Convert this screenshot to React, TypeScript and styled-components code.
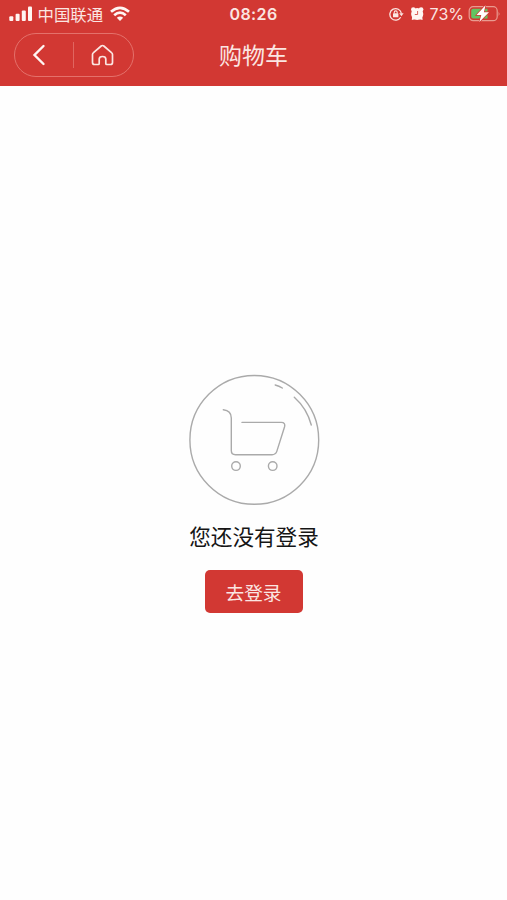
import React from "react";
import styled, { createGlobalStyle } from "styled-components";

const GlobalStyle = createGlobalStyle`
  * { box-sizing: border-box; }
  body {
    margin: 0;
    background: #fff;
    font-family: "Liberation Sans", "Noto Sans CJK SC", sans-serif;
  }
`;

const Page = styled.div`
  width: 100%;
  height: 900px;
  display: flex;
  flex-direction: column;
  overflow: hidden;
  background: #fefefe;
`;

const Header = styled.header`
  flex: none;
  height: 86px;
  background: #d23833;
  color: #fbe6e2;
`;

const Bar = styled.div<{ $height: number }>`
  display: grid;
  grid-template-columns: 1fr auto 1fr;
  align-items: center;
  height: ${(p) => p.$height}px;
`;

const StatusGroup = styled.div<{ $end?: boolean }>`
  display: flex;
  align-items: center;
  justify-content: ${(p) => (p.$end ? "flex-end" : "flex-start")};
  padding: ${(p) => (p.$end ? "0 6px 0 0" : "0 0 0 9px")};
  svg { flex: none; display: block; }
`;

const Carrier = styled.span`
  margin: 0 7px 0 4.5px;
  font: 400 16.4px/28px "Noto Sans CJK SC", sans-serif;
  white-space: nowrap;
`;

const Clock = styled.span`
  font: 600 16px/28px Inter, sans-serif;
  letter-spacing: 0.4px;
`;

const Percent = styled.span`
  margin: 0 4px 0 6px;
  font: 400 16px/28px Inter, sans-serif;
`;

const Capsule = styled.div`
  display: flex;
  align-items: center;
  width: 120px;
  height: 44px;
  margin-left: 14px;
  border: 1px solid #e4716b;
  border-radius: 22px;
`;

const CapsuleButton = styled.button`
  flex: none;
  width: 58px;
  height: 100%;
  padding: 0 1px 0 0;
  border: 0;
  display: flex;
  align-items: center;
  justify-content: center;
  background: none;
  color: inherit;
  &:first-child { padding-right: 10px; }
`;

const Divider = styled.span`
  width: 1px;
  height: 26px;
  background: #e06660;
`;

const Title = styled.h1`
  margin: 0 0 2px;
  font: 400 23px/50px "Noto Sans CJK SC", sans-serif;
`;

const Empty = styled.main`
  flex: 1;
  display: flex;
  flex-direction: column;
  align-items: center;
  padding-top: 288px;
  svg { display: block; }
`;

const Message = styled.p`
  margin: 14px 0 17.5px 1px;
  color: #151515;
  font: 400 21.6px/32px "Noto Sans CJK SC", sans-serif;
`;

const LoginButton = styled.button`
  width: 98px;
  height: 43px;
  padding: 0;
  border: 0;
  border-radius: 5px;
  background: #d23833;
  color: #fbe6e2;
  font: 400 18.7px/43px "Noto Sans CJK SC", sans-serif;
`;

const Signal = () => (
  <svg width="24" height="28" viewBox="0 0 24 28" fill="#fff5f2">
    <rect x="0.3" y="16.3" width="4" height="4.7" rx="1" />
    <rect x="6.6" y="13.8" width="4" height="7.2" rx="1" />
    <rect x="12.8" y="10.4" width="4" height="10.6" rx="1" />
    <rect x="19" y="6.4" width="4" height="14.6" rx="1" />
  </svg>
);

const Wifi = () => (
  <svg width="20" height="28" viewBox="0 0 20 28" fill="none" stroke="#fff5f2" strokeWidth="2.7">
    <path d="M1 11.8Q10 3.8 19 11.8M4.2 15.2Q10 10 15.8 15.2" />
    <path d="M6.8 17.8Q10 15 13.2 17.8L10 21Z" fill="#fff5f2" stroke="none" />
  </svg>
);

const RotationLock = () => (
  <svg width="21" height="28" viewBox="0 0 21 28" fill="none" stroke="currentColor" strokeWidth="1.3">
    <path d="M11.7 17.3A5.8 5.8 0 1 1 12.4 13.5" />
    <path d="M10.2 13.2H14.6L12.4 16.2Z" fill="currentColor" stroke="none" />
    <rect x="4" y="13.3" width="5.4" height="4" rx="0.6" fill="currentColor" stroke="none" />
    <path d="M5.2 13.6V12.4a1.5 1.5 0 0 1 3 0v1.2" strokeWidth="1.1" />
  </svg>
);

const Alarm = () => (
  <svg width="14" height="28" viewBox="0 0 14 28">
    <g fill="#fff5f2">
      <circle cx="7.2" cy="14" r="6.1" />
      <circle cx="3.3" cy="9.6" r="2.3" />
      <circle cx="11.1" cy="9.6" r="2.3" />
      <path d="M1.8 20 2.2 16 6 19ZM12.6 20 12.2 16 8.4 19Z" />
    </g>
    <path d="M7.6 11V14.5H4.8" fill="none" stroke="#d9605a" strokeWidth="1" />
  </svg>
);

const Battery = () => (
  <svg width="33" height="28" viewBox="0 0 33 28">
    <rect x="1.2" y="6.7" width="28" height="14" rx="4" fill="none" stroke="#e99b90" strokeWidth="1.2" />
    <path d="M30.6 11.5Q32.4 13.7 30.6 15.9Z" fill="#e99b90" />
    <path d="M5.2 8.8H19.5V18.6H5.2Q3.2 18.6 3.2 16.6V10.8Q3.2 8.8 5.2 8.8Z" fill="#62c462" />
    <path d="M17.5 5.3 8.5 15H13.3L11.3 22.1 21 12.2H15.9Z" fill="#fff" stroke="#d23833" strokeWidth="1.4" paintOrder="stroke" />
  </svg>
);

const BackIcon = () => (
  <svg width="14" height="22" viewBox="0 0 14 22" fill="none" stroke="#fff5f2" strokeWidth="2.4" strokeLinecap="round">
    <path d="M11.5 2 2.5 11 11.5 20" />
  </svg>
);

const HomeIcon = () => (
  <svg width="23" height="22" viewBox="0 0 23 22" fill="none" stroke="currentColor" strokeWidth="1.7" strokeLinecap="round" strokeLinejoin="round">
    <path d="M3.5 20.5Q1.5 20.5 1.5 18.5V10.5Q1.5 9.4 2.5 8.6L10.2 2Q11.5 1 12.8 2L20.5 8.6Q21.5 9.4 21.5 10.5V18.5Q21.5 20.5 19.5 20.5H15.8Q14.8 20.5 14.8 19.5V15Q14.8 12.5 11.5 12.5T8.2 15V19.5Q8.2 20.5 7.2 20.5Z" />
  </svg>
);

const EmptyCart = () => (
  <svg width="132" height="132" viewBox="0 0 132 132" fill="none" stroke="#aaa" strokeWidth="1.4" strokeLinecap="round">
    <circle cx="66.3" cy="65.9" r="64.4" />
    <path d="M35.3 35.7Q43.3 36.5 43.3 44V76.5Q43.3 80.7 47.5 80.7H84Q87.7 80.7 88.8 77.4L96.5 53Q97.7 48.4 93.3 48.4H54" />
    <circle cx="48" cy="92.1" r="4.3" />
    <circle cx="84.7" cy="92.1" r="4.3" />
    <path d="M87.2 11Q91 11.9 94.3 14M106.3 23.2Q119 34.5 123.3 51" />
  </svg>
);

export default function App() {
  return (
    <Page>
      <GlobalStyle />
      <Header>
        <Bar $height={28}>
          <StatusGroup>
            <Signal />
            <Carrier>中国联通</Carrier>
            <Wifi />
          </StatusGroup>
          <Clock>08:26</Clock>
          <StatusGroup $end>
            <RotationLock />
            <Alarm />
            <Percent>73%</Percent>
            <Battery />
          </StatusGroup>
        </Bar>
        <Bar $height={53}>
          <Capsule>
            <CapsuleButton aria-label="返回"><BackIcon /></CapsuleButton>
            <Divider />
            <CapsuleButton aria-label="首页"><HomeIcon /></CapsuleButton>
          </Capsule>
          <Title>购物车</Title>
        </Bar>
      </Header>
      <Empty>
        <EmptyCart />
        <Message>您还没有登录</Message>
        <LoginButton>去登录</LoginButton>
      </Empty>
    </Page>
  );
}
